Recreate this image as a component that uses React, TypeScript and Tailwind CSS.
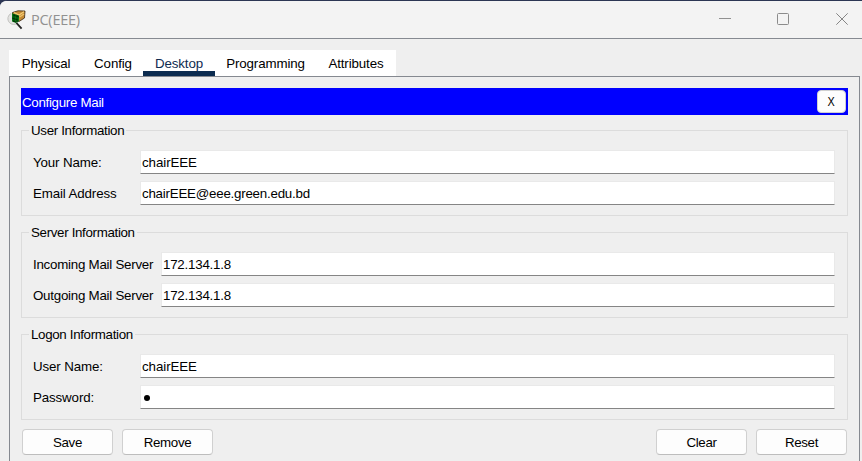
import type { ReactNode } from "react";

function Field({ label, value, wide, tight }: { label: string; value: ReactNode; wide?: boolean; tight?: boolean }) {
  return (
    <div className="flex h-6 items-center">
      <label className={`shrink-0 pt-0.5 whitespace-nowrap ${wide ? "w-[128px] tracking-[-0.25px]" : "w-[107px] tracking-[-0.13px]"}`}>{label}</label>
      <div
        className={`flex h-6 flex-1 items-center border border-[#e9e9e9] border-b-[#858585] bg-white pt-0.5 pl-px text-black ${tight ? "tracking-[-0.23px]" : "tracking-[-0.08px]"}`}
      >
        {value}
      </div>
    </div>
  );
}

function Group({ title, children }: { title: string; children: ReactNode }) {
  return (
    <fieldset className="h-[94px] border border-[#dcdcdc] pr-3 pl-[11px]">
      <legend className="-ml-[4px] h-4 pr-[2px] pl-[2px] leading-[18px] tracking-[-0.33px]">{title}</legend>
      <div className="flex flex-col gap-[7px] pt-3">{children}</div>
    </fieldset>
  );
}

function Button({ children }: { children: ReactNode }) {
  return (
    <button className="h-[26px] w-[91px] rounded-[4px] border border-[#d0d0d0] border-b-[#bdbdbd] bg-[#fdfdfd] pt-px text-center leading-6 tracking-[-0.35px]">
      {children}
    </button>
  );
}

function AppIcon() {
  return (
    <svg width="20" height="20" viewBox="0 0 20 20" className="shrink-0">
      <path d="M6.5 2.5 12 .8 19 1 18.5 8 13 11.5 6 10Z" fill="#c58a34" stroke="#392814" strokeWidth="0.8" />
      <path d="M8 2.5 13 5 18 1.7" fill="none" stroke="#f5cf78" strokeWidth="1.1" />
      <path d="M13.5 7 18 4" stroke="#edc36c" strokeWidth="1.5" />
      <path d="M5 3.5A5.8 5.8 0 1 0 12 12.5" fill="#e4e4e2" stroke="#c2c2c0" strokeWidth="1" />
      <path d="M6 3.2 13 5.5 13 11 10 13 6 11.5Z" fill="#087a16" />
      <path d="M7 5 13 7M6 8 12 10M7 11 10 12M8 4V12M11 5V12" stroke="#022f08" strokeWidth="0.9" />
      <path d="M11 13.5 15 18" stroke="#242424" strokeWidth="1.8" strokeLinecap="square" />
    </svg>
  );
}

const tabs = [
  { name: "Physical", width: "w-[74px]" },
  { name: "Config", width: "w-[60px]" },
  { name: "Desktop", width: "w-[72px]" },
  { name: "Programming", width: "w-[101px]" },
  { name: "Attributes", width: "w-[80px]" },
];

export default function App() {
  return (
    <div className="h-[461px] w-[862px] overflow-hidden bg-[#2c3654] font-['Liberation_Sans',Arial,sans-serif] text-[13.33px] leading-4 text-black">
      <div className="flex h-[461px] flex-col rounded-tl-[7px] border-t border-[#2c3654] bg-[#efefef]">
        <header className="flex h-[38px] shrink-0 items-center rounded-tl-[6px] border-b border-[#868a91] bg-[#f3f3f3]">
          <div className="flex items-center gap-[5px] pl-1.5">
            <AppIcon />
            <span className="font-['Open_Sans','Noto_Sans',sans-serif] text-[14.5px] tracking-[-0.25px] text-[#919191]">PC(EEE)</span>
          </div>
          <div className="ml-auto flex items-center gap-[46px] pr-[14px]">
            <svg width="12" height="12" viewBox="0 0 12 12" className="-translate-x-px"><path d="M0 4.5H12" stroke="#919191" /></svg>
            <svg width="12" height="12" viewBox="0 0 12 12" className="-translate-x-px -translate-y-px"><rect x=".5" y=".5" width="11" height="11" rx="1" fill="none" stroke="#8b8b8b" /></svg>
            <svg width="12" height="12" viewBox="0 0 12 12" className="-translate-y-px"><path d="M.3.3 11.7 11.7M11.7.3.3 11.7" stroke="#858585" /></svg>
          </div>
        </header>
        <nav className="mt-[11px] ml-[9px] flex h-[26px] w-[387px] shrink-0 bg-white tracking-[-0.12px]">
          {tabs.map((t) => (
            <div
              key={t.name}
              className={`flex h-[26px] justify-center pt-1.5 ${t.width} ${t.name === "Desktop" ? "border-b-5 border-[#0b2b4f] text-[#102b50]" : ""}`}
            >
              {t.name}
            </div>
          ))}
        </nav>
        <main className="mr-[2px] ml-[9px] flex flex-1 flex-col border border-b-0 border-[#858990] px-[11px] pt-[11px]">
          <div className="flex h-[27px] shrink-0 items-center justify-between bg-[#0000ff] pr-[2px] pl-px text-white">
            <span className="pt-0.5 tracking-[-0.3px]">Configure Mail</span>
            <button className="h-[23px] w-[29px] rounded-[4px] border border-[#d0d0d0] bg-[#fdfdfd] text-[12px] text-black"><span className="inline-block scale-x-90">X</span></button>
          </div>
          <form className="mt-[7px] flex flex-col gap-2">
            <Group title="User Information">
              <Field label="Your Name:" value="chairEEE" />
              <Field label="Email Address" value="chairEEE@eee.green.edu.bd" tight />
            </Group>
            <Group title="Server Information">
              <Field label="Incoming Mail Server" value="172.134.1.8" wide tight />
              <Field label="Outgoing Mail Server" value="172.134.1.8" wide tight />
            </Group>
            <Group title="Logon Information">
              <Field label="User Name:" value="chairEEE" />
              <Field label="Password:" value={<span className="ml-[2px] size-1.5 rounded-full bg-black" />} />
            </Group>
          </form>
          <div className="mt-[9px] flex gap-[9px] px-px">
            <Button>Save</Button>
            <Button>Remove</Button>
            <div className="flex-1" />
            <Button>Clear</Button>
            <Button>Reset</Button>
          </div>
        </main>
      </div>
    </div>
  );
}
